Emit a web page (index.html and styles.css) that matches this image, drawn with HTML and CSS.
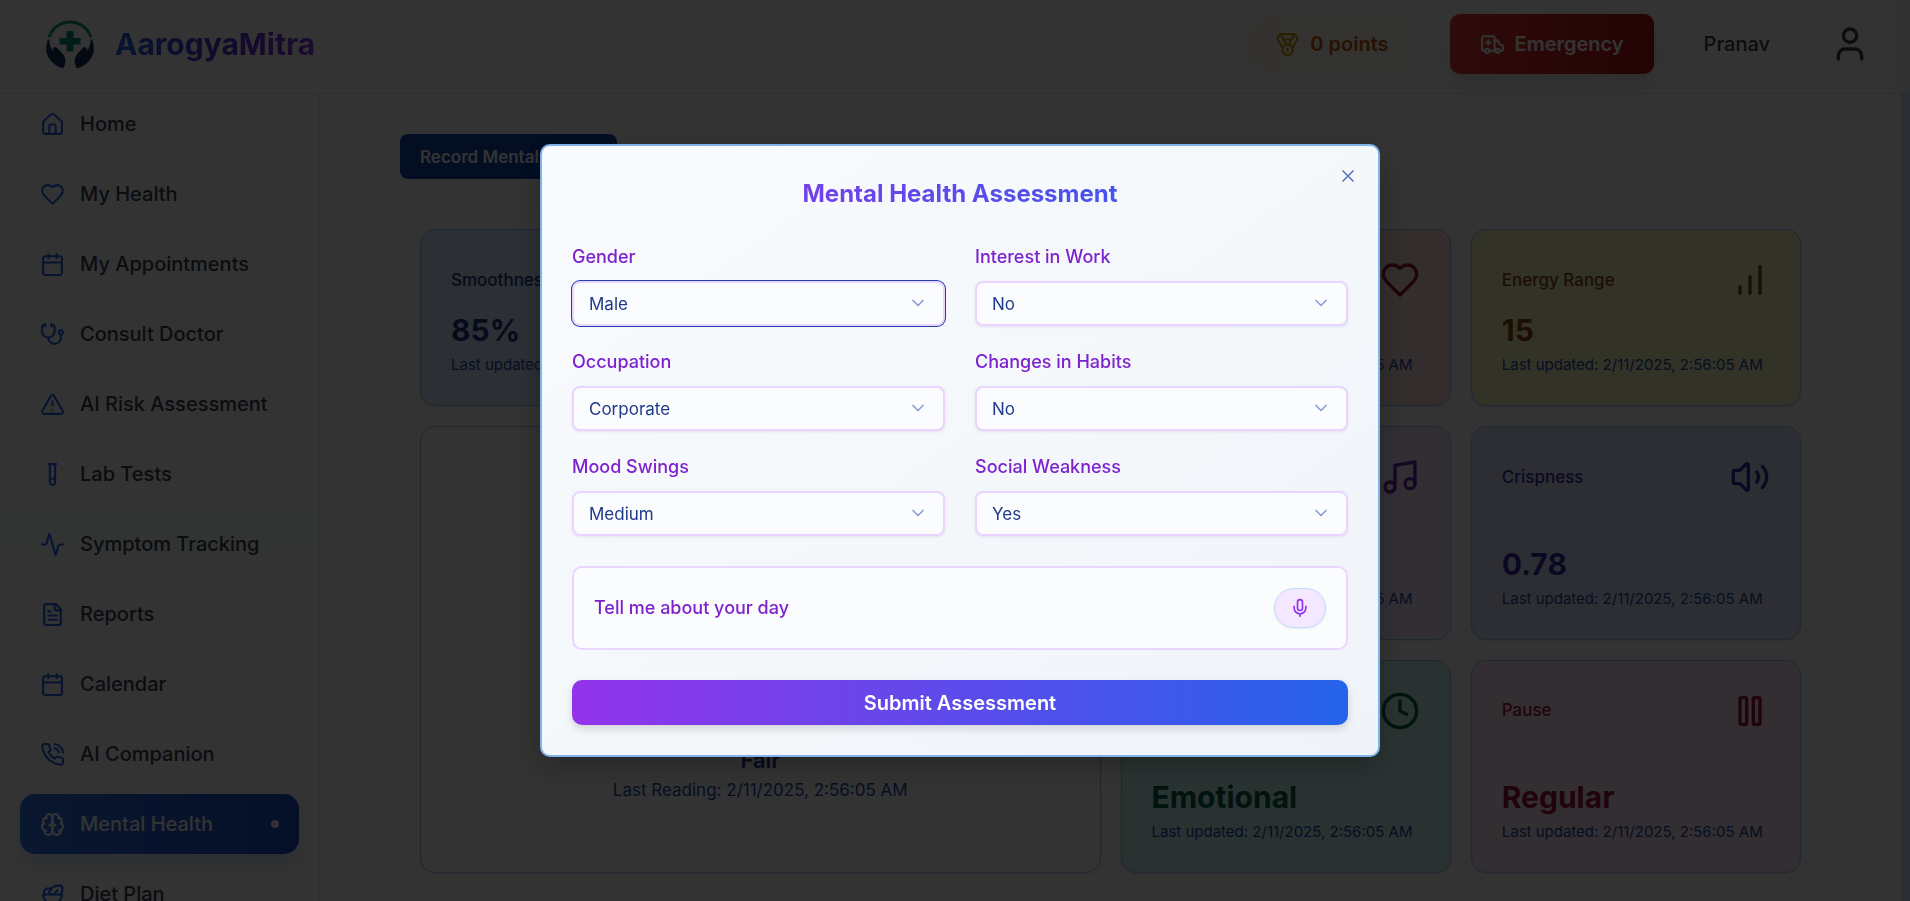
FILE: index.html
```html
<!DOCTYPE html>
<html lang="en">
<head>
<meta charset="utf-8">
<title>AarogyaMitra</title>
<link rel="stylesheet" href="styles.css">
</head>
<body>
<svg class="sprite" aria-hidden="true">
  <symbol id="home" viewBox="0 0 24 24"><path d="M15 21v-8a1 1 0 0 0-1-1h-4a1 1 0 0 0-1 1v8"/><path d="M3 10a2 2 0 0 1 .709-1.528l7-5.999a2 2 0 0 1 2.582 0l7 5.999A2 2 0 0 1 21 10v9a2 2 0 0 1-2 2H5a2 2 0 0 1-2-2z"/></symbol>
  <symbol id="heart" viewBox="0 0 24 24"><path d="M19 14c1.49-1.46 3-3.21 3-5.5A5.5 5.5 0 0 0 16.5 3c-1.76 0-3 .5-4.5 2-1.5-1.5-2.74-2-4.5-2A5.5 5.5 0 0 0 2 8.5c0 2.3 1.5 4.05 3 5.5l7 7Z"/></symbol>
  <symbol id="calendar" viewBox="0 0 24 24"><path d="M8 2v4M16 2v4M3 10h18"/><rect x="3" y="4" width="18" height="18" rx="2"/></symbol>
  <symbol id="stethoscope" viewBox="0 0 24 24"><path d="M11 2v2M5 2v2"/><path d="M5 3H4a2 2 0 0 0-2 2v4a6 6 0 0 0 12 0V5a2 2 0 0 0-2-2h-1"/><path d="M8 15a6 6 0 0 0 12 0v-3"/><circle cx="20" cy="10" r="2"/></symbol>
  <symbol id="alert" viewBox="0 0 24 24"><path d="m21.73 18-8-14a2 2 0 0 0-3.48 0l-8 14A2 2 0 0 0 4 21h16a2 2 0 0 0 1.73-3"/><path d="M12 9v4M12 17h.01"/></symbol>
  <symbol id="tube" viewBox="0 0 24 24"><path d="M14.5 2v17.5c0 1.4-1.1 2.5-2.5 2.5s-2.5-1.1-2.5-2.5V2"/><path d="M8.5 2h7M14.5 16h-5"/></symbol>
  <symbol id="activity" viewBox="0 0 24 24"><path d="M22 12h-2.48a2 2 0 0 0-1.93 1.46l-2.35 8.36a.25.25 0 0 1-.48 0L9.24 2.18a.25.25 0 0 0-.48 0l-2.35 8.36A2 2 0 0 1 4.49 12H2"/></symbol>
  <symbol id="file" viewBox="0 0 24 24"><path d="M15 2H6a2 2 0 0 0-2 2v16a2 2 0 0 0 2 2h12a2 2 0 0 0 2-2V7Z"/><path d="M14 2v4a2 2 0 0 0 2 2h4M10 9H8M16 13H8M16 17H8"/></symbol>
  <symbol id="phone" viewBox="0 0 24 24"><path d="M22 16.92v3a2 2 0 0 1-2.18 2 19.79 19.79 0 0 1-8.63-3.07 19.5 19.5 0 0 1-6-6 19.79 19.79 0 0 1-3.07-8.67A2 2 0 0 1 4.11 2h3a2 2 0 0 1 2 1.72 12.84 12.84 0 0 0 .7 2.81 2 2 0 0 1-.45 2.11L8.09 9.91a16 16 0 0 0 6 6l1.27-1.27a2 2 0 0 1 2.11-.45 12.84 12.84 0 0 0 2.81.7A2 2 0 0 1 22 16.92z"/><path d="M14.05 2a9 9 0 0 1 8 7.94M14.05 6A5 5 0 0 1 18 10"/></symbol>
  <symbol id="brain" viewBox="0 0 24 24"><path d="M12 5a3 3 0 1 0-5.997.125 4 4 0 0 0-2.526 5.77 4 4 0 0 0 .556 6.588A4 4 0 1 0 12 18Z"/><path d="M12 5a3 3 0 1 1 5.997.125 4 4 0 0 1 2.526 5.77 4 4 0 0 1-.556 6.588A4 4 0 1 1 12 18Z"/><path d="M15 13a4.5 4.5 0 0 1-3-4 4.5 4.5 0 0 1-3 4"/><path d="M17.599 6.5a3 3 0 0 0 .399-1.375M6.003 5.125A3 3 0 0 0 6.401 6.5M3.477 10.896a4 4 0 0 1 .585-.396M19.938 10.5a4 4 0 0 1 .585.396M6 18a4 4 0 0 1-1.967-.516M19.967 17.484A4 4 0 0 1 18 18"/></symbol>
  <symbol id="salad" viewBox="0 0 24 24"><path d="M7 21h10"/><path d="M12 21a9 9 0 0 0 9-9H3a9 9 0 0 0 9 9Z"/><path d="M11.38 12a2.4 2.4 0 0 1-.4-4.77 2.4 2.4 0 0 1 3.2-2.77 2.4 2.4 0 0 1 3.47-.63 2.4 2.4 0 0 1 3.37 3.37 2.4 2.4 0 0 1-1.1 3.7 2.51 2.51 0 0 1 .03 1.1"/><path d="m13 12 4-4"/><path d="M10.9 7.25A3.99 3.99 0 0 0 4 10c0 .73.2 1.41.54 2"/></symbol>
  <symbol id="medal" viewBox="0 0 24 24"><path d="M7.21 15 2.66 7.14a2 2 0 0 1 .13-2.2L4.4 2.8A2 2 0 0 1 6 2h12a2 2 0 0 1 1.6.8l1.6 2.14a2 2 0 0 1 .14 2.2L16.79 15"/><path d="M11 12 5.12 2.2M13 12l5.88-9.8M8 7h8"/><circle cx="12" cy="17" r="5"/><path d="M12 18v-2h-.5"/></symbol>
  <symbol id="ambulance" viewBox="0 0 24 24"><path d="M10 10H6M8 8v4M9 18h6"/><path d="M14 18V6a2 2 0 0 0-2-2H4a2 2 0 0 0-2 2v11a1 1 0 0 0 1 1h2"/><path d="M19 18h2a1 1 0 0 0 1-1v-3.28a1 1 0 0 0-.684-.948l-1.923-.641a1 1 0 0 1-.578-.502l-1.539-3.076A1 1 0 0 0 16.382 8H14"/><circle cx="17" cy="18" r="2"/><circle cx="7" cy="18" r="2"/></symbol>
  <symbol id="user" viewBox="0 0 24 24"><path d="M19 21v-2a4 4 0 0 0-4-4H9a4 4 0 0 0-4 4v2"/><circle cx="12" cy="7" r="4"/></symbol>
  <symbol id="bars" viewBox="0 0 24 24"><path d="M12 20V10M18 20V4M6 20v-4"/></symbol>
  <symbol id="music" viewBox="0 0 24 24"><path d="M9 18V5l12-2v13"/><circle cx="6" cy="18" r="3"/><circle cx="18" cy="16" r="3"/></symbol>
  <symbol id="volume" viewBox="0 0 24 24"><path d="M11 4.702a.705.705 0 0 0-1.203-.498L6.413 7.587A1.4 1.4 0 0 1 5.416 8H3a1 1 0 0 0-1 1v6a1 1 0 0 0 1 1h2.416a1.4 1.4 0 0 1 .997.413l3.383 3.384A.705.705 0 0 0 11 19.298z"/><path d="M16 9a5 5 0 0 1 0 6M19.364 18.364a9 9 0 0 0 0-12.728"/></symbol>
  <symbol id="clock" viewBox="0 0 24 24"><circle cx="12" cy="12" r="10"/><path d="M12 6v6l4 2"/></symbol>
  <symbol id="pause" viewBox="0 0 24 24"><rect x="14" y="4" width="4" height="16" rx="1"/><rect x="6" y="4" width="4" height="16" rx="1"/></symbol>
  <symbol id="mic" viewBox="0 0 24 24"><path d="M12 2a3 3 0 0 0-3 3v7a3 3 0 0 0 6 0V5a3 3 0 0 0-3-3Z"/><path d="M19 10v2a7 7 0 0 1-14 0v-2M12 19v3"/></symbol>
  <symbol id="chevron" viewBox="0 0 24 24"><path d="m6 9 6 6 6-6"/></symbol>
  <symbol id="close" viewBox="0 0 24 24"><path d="M18 6 6 18M6 6l12 12"/></symbol>
</svg>

<div class="app">
  <header class="topbar">
    <a class="brand" href="#">
      <svg class="logo" viewBox="0 0 60 60" aria-hidden="true">
        <path d="M9.500 22A22 22 0 0 1 50.500 22" fill="none" stroke="#0b9b80" stroke-width="3" stroke-linecap="round"/>
        <path d="M26.500 17h7v7h7v6.500h-7v7h-7v-7h-7V24h7z" fill="#0b8a72"/>
        <path d="M8.500 26C5.500 34 6.500 41 12 47c4 4 8 6 11 6.500C25.500 48 25 43 21.500 39.500L16.500 34.500c-1.500-1.500-3.500 0-2.500 1.800l2.500 4.200C12 38 9 33 8.500 26z" fill="#16325f" stroke="#16325f" stroke-width="1.500" stroke-linejoin="round"/>
        <path d="M51.500 26C54.500 34 53.500 41 48 47c-4 4-8 6-11 6.500C34.500 48 35 43 38.500 39.500L43.500 34.500c1.500-1.500 3.500 0 2.500 1.800l-2.500 4.200C48 38 51 33 51.500 26z" fill="#16325f" stroke="#16325f" stroke-width="1.500" stroke-linejoin="round"/>
      </svg>
      <span class="brand-name">AarogyaMitra</span>
    </a>
    <div class="actions">
      <div class="points"><svg class="icon"><use href="#medal"/></svg><span>0 points</span></div>
      <button class="emergency" type="button"><svg class="icon"><use href="#ambulance"/></svg><span>Emergency</span></button>
      <a class="account" href="#">Pranav</a>
      <button class="avatar" type="button" aria-label="Profile"><svg class="icon icon-lg"><use href="#user"/></svg></button>
    </div>
  </header>

  <div class="body">
    <nav class="sidebar">
      <a class="nav-item" href="#"><svg class="icon"><use href="#home"/></svg><span>Home</span></a>
      <a class="nav-item" href="#"><svg class="icon"><use href="#heart"/></svg><span>My Health</span></a>
      <a class="nav-item" href="#"><svg class="icon"><use href="#calendar"/></svg><span>My Appointments</span></a>
      <a class="nav-item" href="#"><svg class="icon"><use href="#stethoscope"/></svg><span>Consult Doctor</span></a>
      <a class="nav-item" href="#"><svg class="icon"><use href="#alert"/></svg><span>AI Risk Assessment</span></a>
      <a class="nav-item" href="#"><svg class="icon"><use href="#tube"/></svg><span>Lab Tests</span></a>
      <a class="nav-item" href="#"><svg class="icon"><use href="#activity"/></svg><span>Symptom Tracking</span></a>
      <a class="nav-item" href="#"><svg class="icon"><use href="#file"/></svg><span>Reports</span></a>
      <a class="nav-item" href="#"><svg class="icon"><use href="#calendar"/></svg><span>Calendar</span></a>
      <a class="nav-item" href="#"><svg class="icon"><use href="#phone"/></svg><span>AI Companion</span></a>
      <a class="nav-item active" href="#" aria-current="page"><svg class="icon"><use href="#brain"/></svg><span>Mental Health</span><i class="dot"></i></a>
      <a class="nav-item" href="#"><svg class="icon"><use href="#salad"/></svg><span>Diet Plan</span></a>
    </nav>

    <main class="content">
      <button class="record" type="button">Record Mental Health</button>
      <div class="cards">
        <section class="card blue">
          <div class="card-head"><h3>Smoothness</h3></div>
          <div><p class="value">85%</p><p class="updated">Last updated: 2/11/2025, 2:56:05 AM</p></div>
        </section>
        <section class="card blue"></section>
        <section class="card red">
          <div class="card-head"><svg class="icon icon-lg"><use href="#heart"/></svg></div>
          <div><p class="updated">Last updated: 2/11/2025, 2:56:05 AM</p></div>
        </section>
        <section class="card yellow">
          <div class="card-head"><h3>Energy Range</h3><svg class="icon icon-lg"><use href="#bars"/></svg></div>
          <div><p class="value">15</p><p class="updated">Last updated: 2/11/2025, 2:56:05 AM</p></div>
        </section>
        <section class="card summary">
          <p class="mood">Fair</p>
          <p class="reading">Last Reading: 2/11/2025, 2:56:05 AM</p>
        </section>
        <section class="card purple">
          <div class="card-head"><svg class="icon icon-lg"><use href="#music"/></svg></div>
          <div><p class="updated">Last updated: 2/11/2025, 2:56:05 AM</p></div>
        </section>
        <section class="card indigo">
          <div class="card-head"><h3>Crispness</h3><svg class="icon icon-lg"><use href="#volume"/></svg></div>
          <div><p class="value">0.78</p><p class="updated">Last updated: 2/11/2025, 2:56:05 AM</p></div>
        </section>
        <section class="card teal">
          <div class="card-head"><svg class="icon icon-lg"><use href="#clock"/></svg></div>
          <div><p class="value">Emotional</p><p class="updated">Last updated: 2/11/2025, 2:56:05 AM</p></div>
        </section>
        <section class="card pink">
          <div class="card-head"><h3>Pause</h3><svg class="icon icon-lg"><use href="#pause"/></svg></div>
          <div><p class="value">Regular</p><p class="updated">Last updated: 2/11/2025, 2:56:05 AM</p></div>
        </section>
      </div>
    </main>
  </div>
</div>

<div class="overlay">
  <form class="dialog" role="dialog" aria-labelledby="dialog-title">
    <button class="close" type="button" aria-label="Close"><svg class="icon icon-sm"><use href="#close"/></svg></button>
    <h2 class="dialog-title" id="dialog-title">Mental Health Assessment</h2>
    <div class="fields">
      <div class="field focused"><label for="gender">Gender</label><div class="select"><select id="gender"><option>Male</option></select><svg class="icon icon-sm"><use href="#chevron"/></svg></div></div>
      <div class="field"><label for="interest">Interest in Work</label><div class="select"><select id="interest"><option>No</option></select><svg class="icon icon-sm"><use href="#chevron"/></svg></div></div>
      <div class="field"><label for="occupation">Occupation</label><div class="select"><select id="occupation"><option>Corporate</option></select><svg class="icon icon-sm"><use href="#chevron"/></svg></div></div>
      <div class="field"><label for="habits">Changes in Habits</label><div class="select"><select id="habits"><option>No</option></select><svg class="icon icon-sm"><use href="#chevron"/></svg></div></div>
      <div class="field"><label for="mood">Mood Swings</label><div class="select"><select id="mood"><option>Medium</option></select><svg class="icon icon-sm"><use href="#chevron"/></svg></div></div>
      <div class="field"><label for="social">Social Weakness</label><div class="select"><select id="social"><option>Yes</option></select><svg class="icon icon-sm"><use href="#chevron"/></svg></div></div>
    </div>
    <div class="day">
      <label for="mic-button">Tell me about your day</label>
      <button class="mic" id="mic-button" type="button"><svg class="icon icon-sm"><use href="#mic"/></svg></button>
    </div>
    <button class="submit" type="submit">Submit Assessment</button>
  </form>
</div>
</body>
</html>
```
FILE: styles.css
```css
* { box-sizing: border-box; }

body {
  margin: 0;
  font-family: Inter, "Liberation Sans", sans-serif;
  font-size: 20px;
  color: #1f2937;
  background: #cfe2f2;
  overflow: hidden;
}

h2, h3, p { margin: 0; }
a { color: inherit; text-decoration: none; }
button, select { font: inherit; cursor: pointer; }

.sprite { position: absolute; width: 0; height: 0; }

.icon {
  display: block;
  flex: none;
  width: 25px;
  height: 25px;
  fill: none;
  stroke: currentColor;
  stroke-width: 2;
  stroke-linecap: round;
  stroke-linejoin: round;
}
.icon-sm { width: 20px; height: 20px; }
.icon-lg { width: 40px; height: 40px; }

.app { display: flex; flex-direction: column; height: 100vh; }

/* Top bar */
.topbar {
  display: flex;
  align-items: center;
  justify-content: space-between;
  flex: none;
  padding: 14px 30px 19px 40px;
  border-bottom: 1px solid #e5e7eb;
  background: linear-gradient(to left, #f0f4fb, #fff 30px);
}
.brand { display: flex; align-items: center; gap: 15px; }
.logo { width: 60px; height: 60px; }
.brand-name {
  font-size: 30px;
  font-weight: 700;
  line-height: 40px;
  background: linear-gradient(to right, #2563eb, #4f35d0 50%, #9333ea);
  -webkit-background-clip: text;
  background-clip: text;
  color: transparent;
}
.actions { display: flex; align-items: center; gap: 30px; }
.points {
  display: flex;
  align-items: center;
  gap: 10px;
  padding: 16px 30px;
  border: 1px solid #fdf8e0;
  border-radius: 30px;
  background: linear-gradient(to right, #fefbec, #fffcf5);
  color: #c8560c;
  font-weight: 600;
}
.points .icon { color: #ca9a04; }
.emergency {
  display: flex;
  align-items: center;
  gap: 10px;
  height: 60px;
  padding: 0 30px;
  border: 0;
  border-radius: 10px;
  background: linear-gradient(to right, #e83c38, #b00f18);
  box-shadow: 0 10px 15px rgba(0, 0, 0, 0.1);
  color: #fff;
  font-weight: 600;
}
.account { padding: 0 20px; color: #374151; font-weight: 500; }
.avatar { padding: 10px; border: 0; border-radius: 50%; background: #fdfdfe; color: #374151; }

/* Page body */
.body { display: flex; flex: 1; min-height: 0; padding-right: 9px; }

.sidebar {
  display: flex;
  flex-direction: column;
  gap: 10px;
  flex: none;
  width: 320px;
  padding: 0 20px;
  border-right: 1px solid #e5e7eb;
  background: linear-gradient(to bottom, #fff 300px, #f7fdfa 550px, #fff 551px);
  overflow: hidden;
}
.nav-item {
  display: flex;
  align-items: center;
  gap: 15px;
  flex: none;
  height: 60px;
  padding: 0 20px;
  border-radius: 15px;
  color: #374151;
  font-weight: 500;
}
.nav-item .icon { color: #2563eb; }
.nav-item.active {
  background: linear-gradient(to right, #2f74ea, #1a4cc8);
  box-shadow: 0 10px 15px rgba(59, 130, 246, 0.2);
  color: #fff;
}
.nav-item.active .icon { color: #fff; }
.dot { width: 8px; height: 8px; margin-left: auto; border-radius: 50%; background: #fff; }

.content { flex: 1; min-width: 0; padding: 40px 80px; background: #fff; overflow: hidden; }

.record {
  display: block;
  height: 45px;
  margin-bottom: 50px;
  padding: 0 20px;
  border: 0;
  border-radius: 8px;
  background: #1346ad;
  color: #fff;
  font-size: 17px;
  font-weight: 600;
}

.cards {
  display: grid;
  grid-template-columns: repeat(4, 1fr);
  grid-template-rows: auto 1fr 1fr;
  gap: 20px;
  padding: 0 20px;
}
.card {
  display: flex;
  flex-direction: column;
  justify-content: space-between;
  gap: 10px;
  padding: 30px;
  border: 1px solid #93c5fd;
  border-radius: 15px;
  box-shadow: 0 1px 3px rgba(0, 0, 0, 0.1);
}
.card-head { display: flex; align-items: center; justify-content: space-between; min-height: 40px; }
.card-head .icon { margin-left: auto; }
.card h3 { font-size: 17px; font-weight: 500; line-height: 25px; }
.value { margin-bottom: 5px; font-size: 30px; font-weight: 700; line-height: 40px; }
.updated { font-size: 15px; line-height: 20px; color: #1c4ba8; }

.blue { background: #dbeafe; color: #1e3a8a; }
.red { background: #fee2e2; color: #991b1b; }
.yellow { background: #fef9c3; color: #854d0e; }
.purple { background: #f3e8ff; color: #6b21a8; }
.indigo { background: #e0e7ff; color: #3730a3; }
.teal { background: #ccfbf1; color: #065f46; }
.pink { background: #fce7f3; color: #9f1239; }

.summary {
  grid-column: span 2;
  grid-row: span 2;
  justify-content: flex-end;
  align-items: center;
  gap: 0;
  min-height: 447px;
  padding-bottom: 69px;
  background: #fff;
  color: #1e3a8a;
}
.mood { font-size: 22px; font-weight: 600; line-height: 35px; }
.reading { font-size: 17px; line-height: 25px; color: #1c4ba8; }

/* Assessment dialog */
.overlay {
  position: fixed;
  inset: 0;
  display: flex;
  align-items: center;
  justify-content: center;
  padding-left: 10px;
  background: rgba(0, 0, 0, 0.8);
}
.dialog {
  position: relative;
  width: 100%;
  max-width: 840px;
  padding: 30px;
  border: 2px solid #7fb3ea;
  border-radius: 10px;
  background: linear-gradient(to bottom right, #f9fafe, #f4f8fb 50%, #f0f4fa);
  box-shadow: 0 10px 30px rgba(0, 0, 0, 0.25);
}
.close {
  position: absolute;
  top: 20px;
  right: 20px;
  padding: 0;
  border: 0;
  background: none;
  color: #1e40af;
  opacity: 0.7;
}
.dialog-title {
  margin-bottom: 35px;
  font-size: 24px;
  font-weight: 700;
  line-height: 35px;
  text-align: center;
  background: linear-gradient(to right, #9333ea, #2563eb);
  -webkit-background-clip: text;
  background-clip: text;
  color: transparent;
}
.fields { display: grid; grid-template-columns: 1fr 1fr; gap: 25px 30px; margin-bottom: 30px; }
.field label, .day label { color: #7e22ce; font-size: 18px; font-weight: 500; line-height: 22px; }
.field label { display: block; margin-bottom: 13px; }
.select { position: relative; }
.select select {
  display: block;
  width: 100%;
  height: 45px;
  padding: 0 15px;
  border: 2px solid #e9d5ff;
  border-radius: 8px;
  background: #fbfcfe;
  box-shadow: 0 1px 3px rgba(88, 28, 135, 0.1);
  color: #1e3a8a;
  font-size: 17px;
  appearance: none;
  outline: 0;
}
.focused .select select { box-shadow: 0 0 0 1px #1e40af; }
.select .icon {
  position: absolute;
  top: 12px;
  right: 17px;
  color: #1e40af;
  opacity: 0.5;
  pointer-events: none;
}
.day {
  display: flex;
  align-items: center;
  justify-content: space-between;
  margin-bottom: 30px;
  padding: 20px;
  border: 2px solid #e9d5ff;
  border-radius: 10px;
  background: #fbfcfe;
}
.mic {
  display: flex;
  align-items: center;
  justify-content: center;
  width: 52px;
  height: 40px;
  padding: 0;
  border: 1px solid #bfdbfe;
  border-radius: 20px;
  background: #f3e8ff;
  box-shadow: 0 1px 2px rgba(0, 0, 0, 0.08);
  color: #9333ea;
}
.submit {
  display: block;
  width: 100%;
  height: 45px;
  border: 0;
  border-radius: 10px;
  background: linear-gradient(to right, #9333ea, #2563eb);
  box-shadow: 0 4px 8px rgba(0, 0, 0, 0.14);
  color: #fff;
  font-size: 20px;
  font-weight: 600;
}
```
